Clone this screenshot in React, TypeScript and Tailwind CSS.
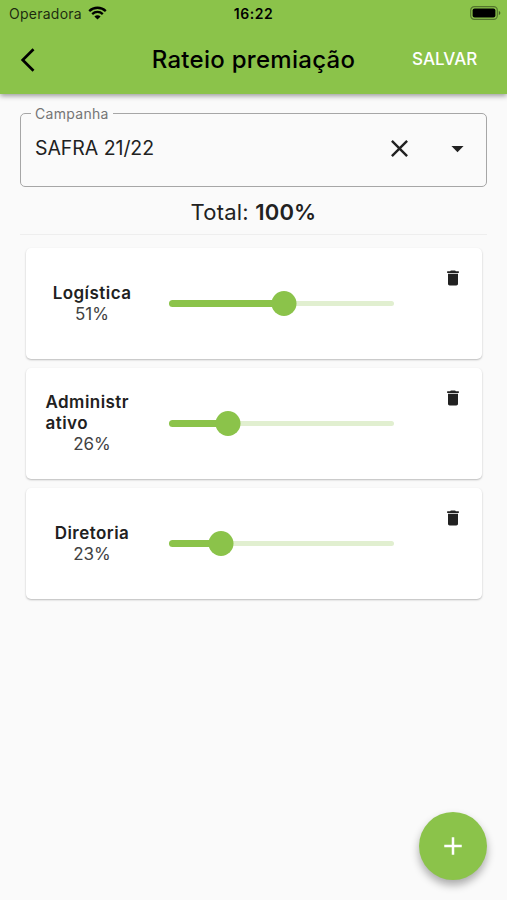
import { useState } from "react";
import { MdAdd, MdArrowDropDown, MdClose, MdDelete } from "react-icons/md";

type Sector = {
  id: number;
  name: string;
  value: number;
};

const initialSectors: Sector[] = [
  { id: 1, name: "Logística", value: 51 },
  { id: 2, name: "Administrativo", value: 26 },
  { id: 3, name: "Diretoria", value: 23 },
];

function StatusBar() {
  return (
    <div className="grid h-[27px] grid-cols-3 items-center pl-[9px] pr-[6px] text-[14px] leading-4">
      <div className="flex items-center gap-[6px]">
        <span className="tracking-[0.25px] text-black/80">Operadora</span>
        <svg width="19" height="14" viewBox="0 0 19 14" fill="none" className="-mt-[2px]">
          <path
            d="M1.2 5.1C5.8.6 13.2.6 17.8 5.1M4.2 8.1c3-2.9 7.6-2.9 10.6 0"
            stroke="black"
            strokeWidth="2.3"
          />
          <path d="M9.5 13.6 6.4 10.5c1.8-1.6 4.4-1.6 6.2 0z" fill="black" />
        </svg>
      </div>
      <span className="-ml-[3px] text-center font-semibold tracking-[0.5px]">16:22</span>
      <svg
        className="-mt-px justify-self-end"
        width="31"
        height="14"
        viewBox="0 0 31 14"
        fill="none"
      >
        <rect
          x="0.7"
          y="0.7"
          width="26.6"
          height="12.6"
          rx="3.6"
          stroke="black"
          strokeOpacity="0.4"
          strokeWidth="1.2"
        />
        <rect x="2.6" y="2.6" width="22.8" height="8.8" rx="2" fill="black" />
        <path d="M28.8 5v4c.9-.3 1.5-1.1 1.5-2s-.6-1.7-1.5-2z" fill="black" fillOpacity="0.5" />
      </svg>
    </div>
  );
}

function Slider({ value }: { value: number }) {
  return (
    <div className="relative flex h-[25px] w-[225px] items-center">
      <div className="h-[5px] w-full rounded-full bg-[#e1efd0]" />
      <div
        className="absolute left-0 top-[9px] h-[7px] rounded-full bg-[#8bc34a]"
        style={{ width: `${value}%` }}
      />
      <div
        className="absolute top-0 size-[25px] -translate-x-1/2 rounded-full bg-[#8bc34a]"
        style={{ left: `${value}%` }}
      />
    </div>
  );
}

export default function App() {
  const [sectors, setSectors] = useState<Sector[]>(initialSectors);
  const total = sectors.reduce((sum, item) => sum + item.value, 0);

  const handleDelete = (id: number) => {
    setSectors(sectors.filter((item) => item.id !== id));
  };

  return (
    <div className="relative h-[900px] w-[507px] overflow-hidden bg-[#fafafa] font-['Inter',sans-serif] text-[#212121]">
      <header className="h-[94px] bg-[#8bc34a] text-black shadow-[0_2px_5px_rgba(0,0,0,0.38)]">
        <StatusBar />
        <div className="grid h-[66px] grid-cols-[100px_1fr_100px] items-center">
          <button type="button" aria-label="Voltar" className="pl-[20px]">
            <svg width="16" height="24" viewBox="0 0 16 24" fill="none">
              <path d="M13.5 1.2 2.7 12l10.8 10.8" stroke="black" strokeWidth="2.7" />
            </svg>
          </button>
          <h1 className="text-center text-[24px] font-medium leading-8 tracking-[0.28px]">
            Rateio premiação
          </h1>
          <button
            type="button"
            className="justify-self-start pl-[5px] text-[17px] font-medium text-white"
          >
            SALVAR
          </button>
        </div>
      </header>

      <main className="px-5">
        {/* Campanha */}
        <fieldset className="mt-[11px] h-[82px] rounded-[5px] border border-[#a6a6a6] pl-[10px]">
          <legend className="px-[4px] pt-px text-[14px] leading-[15px] tracking-[0.3px] text-[#757575]">
            Campanha
          </legend>
          <div className="flex h-[55px] items-center pl-[4px] pr-[14px]">
            <span className="flex-1 pt-px text-[19.5px] tracking-[-0.05px]">SAFRA 21/22</span>
            <MdClose size={29} className="mr-[29px]" />
            <MdArrowDropDown size={29} />
          </div>
        </fieldset>

        <p className="mt-[11px] text-center text-[22px] leading-7 tracking-[0.2px]">
          Total: <b className="font-semibold">{total}%</b>
        </p>
        <hr className="mt-[8px] border-[#eeeeee]" />

        <div className="mt-[13px] flex flex-col gap-[9px] pl-[6px] pr-[5px]">
          {sectors.map((item) => (
            <div
              key={item.id}
              className="flex h-[111px] items-center rounded-[5px] bg-white pl-[19px] shadow-[0_1px_2px_rgba(0,0,0,0.26)]"
            >
              <div className="flex w-[94px] flex-col items-center text-[17px] leading-[21px]">
                <span className="max-w-[93px] break-all font-semibold tracking-[0.45px]">
                  {item.name}
                </span>
                <span className="text-[#424242]">{item.value}%</span>
              </div>
              <div className="ml-[30px]">
                <Slider value={item.value} />
              </div>
              <button
                type="button"
                aria-label="Excluir"
                onClick={() => handleDelete(item.id)}
                className="ml-[49px] mt-[20px] self-start"
              >
                <MdDelete size={20} />
              </button>
            </div>
          ))}
        </div>
      </main>

      <button
        type="button"
        aria-label="Adicionar"
        className="absolute bottom-[20px] right-[20px] flex size-[68px] items-center justify-center rounded-full bg-[#8bc34a] text-white shadow-[0_5px_9px_rgba(0,0,0,0.32)]"
      >
        <MdAdd size={30} />
      </button>
    </div>
  );
}
